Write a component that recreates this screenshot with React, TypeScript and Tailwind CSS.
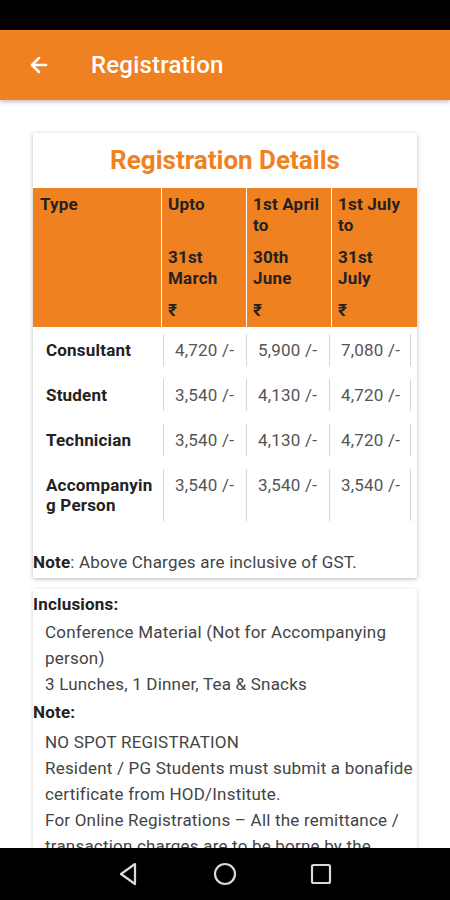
import { ArrowLeft } from 'lucide-react';

const feeRows = [
  { type: 'Consultant', fees: ['4,720 /-', '5,900 /-', '7,080 /-'] },
  { type: 'Student', fees: ['3,540 /-', '4,130 /-', '4,720 /-'] },
  { type: 'Technician', fees: ['3,540 /-', '4,130 /-', '4,720 /-'] },
  { type: 'Accompanying Person', fees: ['3,540 /-', '3,540 /-', '3,540 /-'] },
];

const App = () => {
  return (
    <div className="w-[450px] h-[900px] bg-white flex flex-col overflow-hidden font-['Roboto',sans-serif]">
      {/* status bar */}
      <div className="h-[30px] bg-black shrink-0" />

      {/* app bar */}
      <header className="h-[70px] shrink-0 bg-[#ef8121] flex items-center shadow-[0_2px_4px_rgba(0,0,0,0.25)] relative z-10">
        <ArrowLeft size={24} strokeWidth={2.5} className="text-white ml-[27px]" />
        <h1 className="ml-[40px] text-[24px] font-medium text-white tracking-[0.2px]">Registration</h1>
      </header>

      <main className="flex-1 overflow-hidden px-[33px] pt-[33px] text-[17px] tracking-[0.2px]">
        {/* details card */}
        <section className="bg-white shadow-[0_1px_4px_rgba(0,0,0,0.28)]">
          <h2 className="h-[55px] flex items-center justify-center text-[26px] font-bold text-[#ef8121] tracking-normal">
            Registration Details
          </h2>

          <div className="grid grid-cols-[128px_84px_84px_85px] gap-x-px bg-white leading-[21px] font-bold text-[#222]">
            <div className="bg-[#ef8121] px-[7px] py-[6px]">Type</div>
            <div className="bg-[#ef8121] px-[6px] py-[6px] flex flex-col gap-[11px]">
              <p>Upto<br />&nbsp;</p>
              <p>31st<br />March</p>
              <p>₹</p>
            </div>
            <div className="bg-[#ef8121] px-[6px] py-[6px] flex flex-col gap-[11px]">
              <p>1st April<br />to</p>
              <p>30th<br />June</p>
              <p>₹</p>
            </div>
            <div className="bg-[#ef8121] px-[6px] py-[6px] flex flex-col gap-[11px]">
              <p>1st July<br />to</p>
              <p>31st<br />July</p>
              <p>₹</p>
            </div>
          </div>

          <div className="flex flex-col gap-[13px] pt-[7px] leading-[20px]">
            {feeRows.map((r) => (
              <div key={r.type} className="flex">
                <div className="w-[130px] pl-[13px] pr-[8px] py-[6px] font-bold text-[#222] break-all">
                  {r.type}
                </div>
                {r.fees.map((f, i) => (
                  <div
                    key={i}
                    className={`border-l border-[#d6d6d6] pl-[11px] py-[6px] text-[#555] ${i === 2 ? 'border-r w-[82px]' : 'w-[83px]'}`}
                  >
                    {f}
                  </div>
                ))}
              </div>
            ))}
          </div>

          <p className="pt-[31px] pb-[6px] leading-[20px] text-[#444]">
            <span className="font-bold text-[#222]">Note</span>: Above Charges are inclusive of GST.
          </p>
        </section>

        {/* inclusions card */}
        <section className="mt-[11px] bg-white shadow-[0_1px_4px_rgba(0,0,0,0.2)] pt-[2px] leading-[26px] text-[#444]">
          <p className="font-bold text-[#222]">Inclusions:</p>
          <div className="pl-[12px] pt-[2px]">
            <p>Conference Material (Not for Accompanying person)</p>
            <p>3 Lunches, 1 Dinner, Tea &amp; Snacks</p>
          </div>
          <p className="font-bold text-[#222] pt-[2px]">Note:</p>
          <div className="pl-[12px] pt-[4px]">
            <p>NO SPOT REGISTRATION</p>
            <p>Resident / PG Students must submit a bonafide certificate from HOD/Institute.</p>
            <p>For Online Registrations – All the remittance / transaction charges are to be borne by the delegate.</p>
          </div>
        </section>
      </main>

      {/* nav bar */}
      <nav className="h-[52px] shrink-0 bg-black flex items-center justify-center gap-[66px]">
        <svg width="30" height="30" viewBox="0 0 30 30" fill="none" stroke="#d9d9d9" strokeWidth="2.2" strokeLinejoin="round">
          <path d="M21 5 L7 15 L21 25 Z" />
        </svg>
        <svg width="30" height="30" viewBox="0 0 30 30" fill="none" stroke="#d9d9d9" strokeWidth="2.2">
          <circle cx="15" cy="15" r="10" />
        </svg>
        <svg width="30" height="30" viewBox="0 0 30 30" fill="none" stroke="#d9d9d9" strokeWidth="2.2">
          <rect x="6" y="6" width="18" height="18" rx="1.5" />
        </svg>
      </nav>
    </div>
  );
};

export default App;
